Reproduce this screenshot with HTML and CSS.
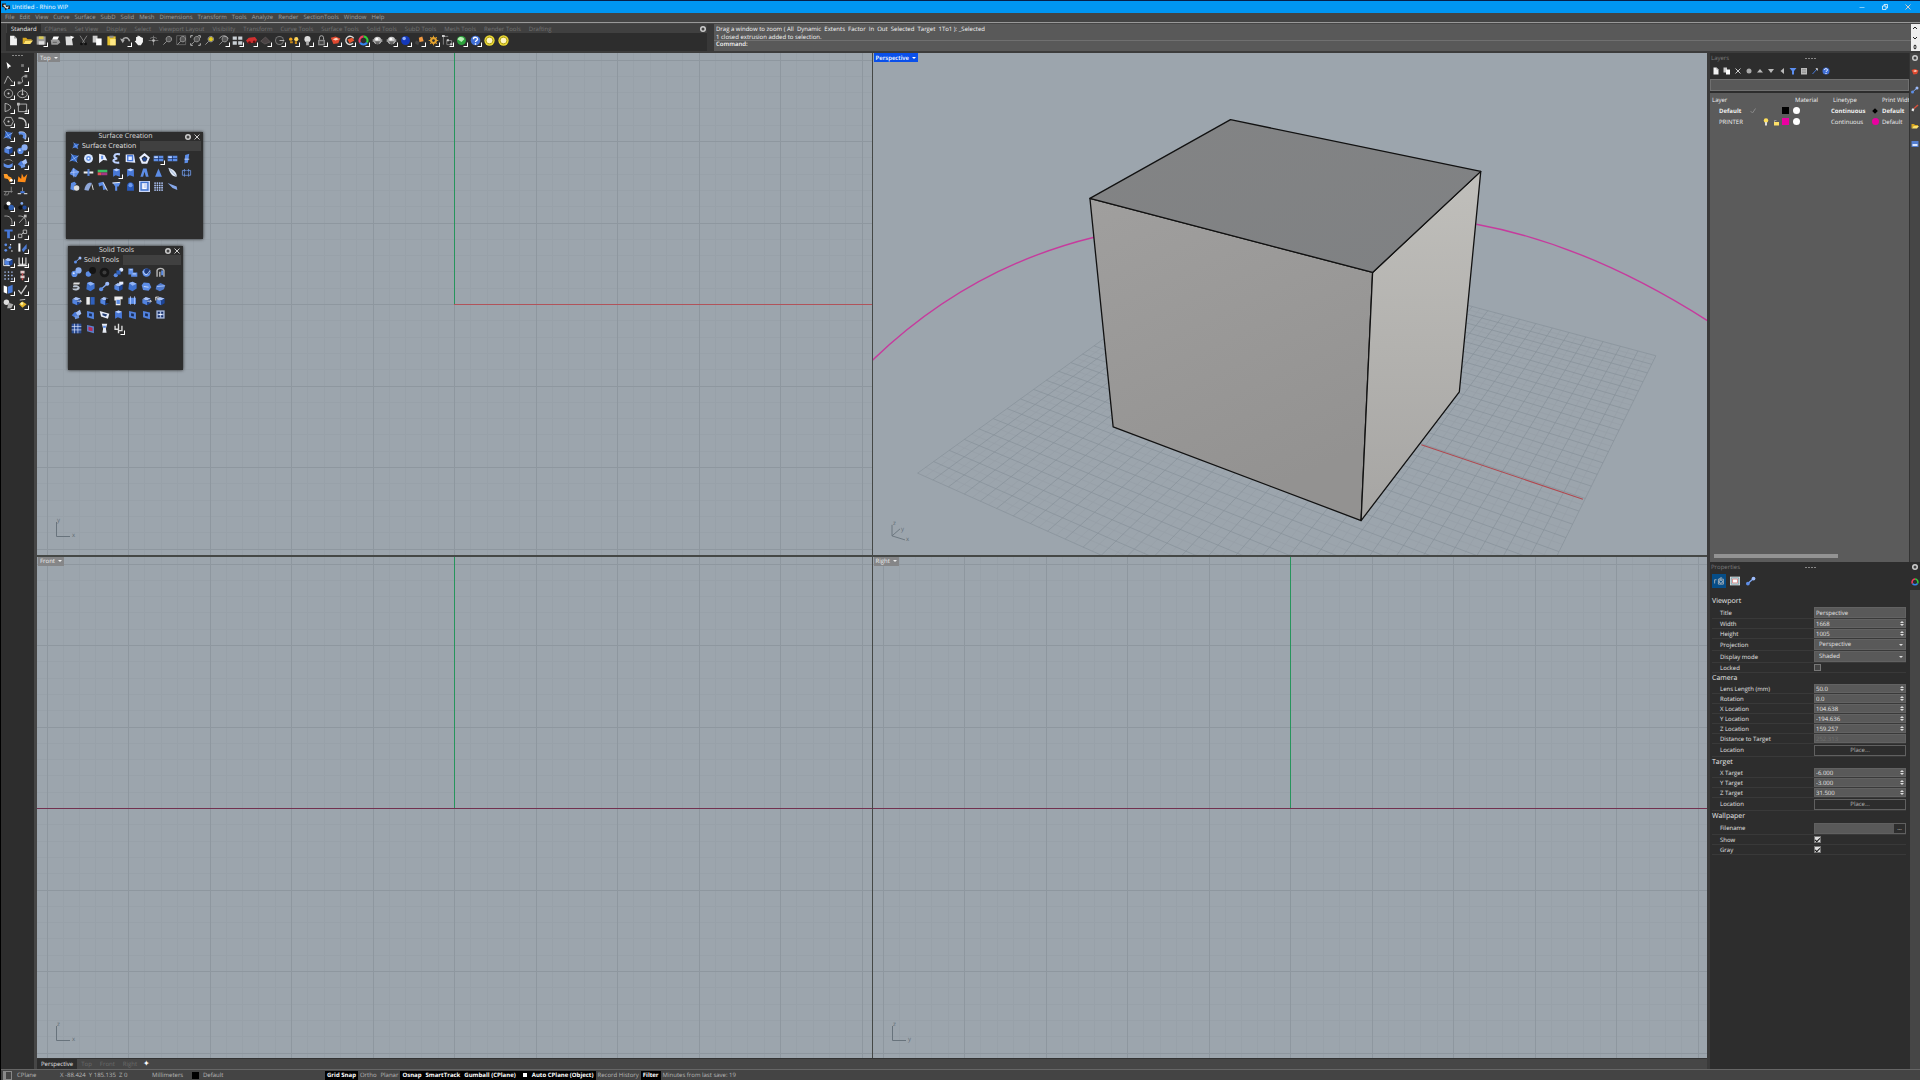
FILE: index.html
```html
<!DOCTYPE html>
<html lang="en">
<head>
<meta charset="utf-8">
<title>Untitled - Rhino WIP</title>
<link rel="stylesheet" href="styles.css">
</head>
<body>
<div class="app">
  <header class="titlebar">
    <span class="app-icon" data-icon="rhino"></span>
    <h1>Untitled - Rhino WIP</h1>
    <div class="window-buttons">
      <button aria-label="Minimize" data-icon="minimize"></button>
      <button aria-label="Restore" data-icon="restore"></button>
      <button aria-label="Close" data-icon="close"></button>
    </div>
  </header>
  <nav class="menubar">
    <button>File</button><button>Edit</button><button>View</button><button>Curve</button><button>Surface</button><button>SubD</button><button>Solid</button><button>Mesh</button><button>Dimensions</button><button>Transform</button><button>Tools</button><button>Analyze</button><button>Render</button><button>SectionTools</button><button>Window</button><button>Help</button>
  </nav>
  <div class="topbar">
    <section class="ribbon">
      <div class="ribbon-tabs">
        <button class="active">Standard</button><button>CPlanes</button><button>Set View</button><button>Display</button><button>Select</button><button>Viewport Layout</button><button>Visibility</button><button>Transform</button><button>Curve Tools</button><button>Surface Tools</button><button>Solid Tools</button><button>SubD Tools</button><button>Mesh Tools</button><button>Render Tools</button><button>Drafting</button>
        <button class="gear" aria-label="Toolbar options" data-icon="gear"></button>
      </div>
      <div class="tools standard" data-tools="page folder save* print clip cut copy paste undo* hand orbit zoom zoombox zoomext zoomsel rotview* four* car* mesh* target* bulbs* bulb* lock* redshape* redring* wheel* ball ball* blueball* brush* gears* dims* greenball* help* yellow yellow"></div>
    </section>
    <section class="command">
      <div class="command-history">
        <p>Drag a window to zoom ( All&nbsp; Dynamic&nbsp; Extents&nbsp; Factor&nbsp; In&nbsp; Out&nbsp; Selected&nbsp; Target&nbsp; 1To1 ): _Selected</p>
        <p>1 closed extrusion added to selection.</p>
      </div>
      <label class="command-line">Command: <input type="text"></label>
      <div class="command-scroll"><button aria-label="Scroll up" data-icon="up"></button><button aria-label="Scroll down" data-icon="down"></button><button aria-label="Command list" data-icon="spin"></button></div>
    </section>
  </div>

  <div class="workspace">
    <aside class="sidebar">
      <span class="grip"></span>
      <div class="tools side" data-tools="arrow point* polyline* curve* circle* ellipse* arc* rect* polygon* fillet* surf* bluearc* box* spheres* pipe* plates* puzzle* flame trim split boolean* points* chamfer* blend* text* scale* array edge* cage* comb* dots* reddots* panels* check* shapes* gold*"></div>
    </aside>

    <main class="stage">
      <div class="viewports">
        <section class="viewport" data-view="top">
          <button class="view-label">Top <i></i></button>
        </section>
        <section class="viewport" data-view="perspective">
          <button class="view-label current">Perspective <i></i></button>
          <svg class="scene" viewBox="873 53 834 502" preserveAspectRatio="xMidYMid slice">
            <defs>
              <linearGradient id="leftFace" x1="0" y1="0" x2="0.4" y2="1"><stop offset="0" stop-color="#a09f9e"/><stop offset="1" stop-color="#939291"/></linearGradient>
              <linearGradient id="rightFace" x1="0" y1="0" x2="0" y2="1"><stop offset="0" stop-color="#c0bfbb"/><stop offset="1" stop-color="#a6a5a3"/></linearGradient>
              <linearGradient id="topFace" x1="0" y1="0" x2="1" y2="1"><stop offset="0" stop-color="#838485"/><stop offset="1" stop-color="#7f8183"/></linearGradient>
            </defs>
            <g class="ground"></g>
            <path d="M1421 445L1582.500 499.300" stroke="#b0484f"/>
            <path d="M872 361C935 300 1010 258 1094 237.500M1476 224.500C1560 240 1640 278 1708 321.500" fill="none" stroke="#c63b9d" stroke-width="1.400"/>
            <g stroke="#111" stroke-width="1.300" stroke-linejoin="round">
              <path d="M1089.800 198.700L1372.300 272.700L1360.800 520.700L1113 427Z" fill="url(#leftFace)"/>
              <path d="M1372.300 272.700L1480.400 171.700L1459 392L1360.800 520.700Z" fill="url(#rightFace)"/>
              <path d="M1089.800 198.700L1230.300 120L1480.400 171.700L1372.300 272.700Z" fill="url(#topFace)"/>
            </g>
            <path d="M892 525V536L905 540M892 536L900 529" fill="none" stroke="#68737c" stroke-width="0.900"/>
            <g class="axis-text"><text x="893" y="525">z</text><text x="901" y="531">y</text><text x="906" y="541">x</text></g>
          </svg>
        </section>
        <section class="viewport" data-view="front">
          <button class="view-label">Front <i></i></button>
        </section>
        <section class="viewport" data-view="right">
          <button class="view-label">Right <i></i></button>
        </section>
      </div>

      <section class="palette surface">
        <header><h2>Surface Creation</h2><button aria-label="Options" data-icon="gear"></button><button aria-label="Close" data-icon="close"></button></header>
        <div class="palette-tab"><span><b data-icon="surf"></b>Surface Creation</span></div>
        <div class="tools" data-tools="surf disc fan swirl sheet pentagon panes* panes strip cross3 crosspipe rgb boxpost* boxpost trap cone leaf net vase fold fold2 funnel arch picked checker wedge"></div>
      </section>
      <section class="palette solid">
        <header><h2>Solid Tools</h2><button aria-label="Options" data-icon="gear"></button><button aria-label="Close" data-icon="close"></button></header>
        <div class="palette-tab"><span><b data-icon="link"></b>Solid Tools</span></div>
        <div class="tools" data-tools="spheres darkpair darkring ballpair boxes bowl shell stack bevel link boxarrow bevel hexbox slab boxright half darkcube cubeedge boxpull boxright boxleft plates hole holewhite boxpost hole hole crate gridhole redhole vase2 cactus*"></div>
      </section>
    </main>

    <aside class="docks">
      <section class="dock layers">
        <div class="dock-main">
          <header><h2>Layers</h2><span class="grip"></span></header>
          <div class="layer-tools" data-tools="page copy close blob triup tridown trileft filter list hammer help"></div>
          <input class="search" type="text" aria-label="Search layers">
          <div class="layer-list">
            <table>
              <colgroup><col class="c-name"><col class="c-check"><col class="c-icon"><col class="c-icon"><col class="c-color"><col class="c-mat"><col class="c-line"><col class="c-icon"><col></colgroup>
              <thead><tr><th>Layer</th><th></th><th></th><th></th><th></th><th>Material</th><th>Linetype</th><th></th><th class="last">Print Width</th></tr></thead>
              <tbody>
                <tr class="bold"><td>Default</td><td><b class="dim" data-icon="tick"></b></td><td></td><td></td><td><i class="swatch black"></i></td><td><i class="dot"></i></td><td>Continuous</td><td><i class="diamond"></i></td><td>Default</td></tr>
                <tr><td>PRINTER</td><td></td><td><b data-icon="lamp"></b></td><td><b data-icon="padlock"></b></td><td><i class="swatch pink"></i></td><td><i class="dot"></i></td><td>Continuous</td><td><i class="dot pink"></i></td><td>Default</td></tr>
              </tbody>
            </table>
            <div class="hscroll"></div>
          </div>
        </div>
        <nav class="dock-tabs"><button aria-label="Options" data-icon="gear"></button><button aria-label="Display" data-icon="redshape"></button><button aria-label="Layers" data-icon="link"></button><button aria-label="Notes" data-icon="redbrush"></button><button aria-label="Libraries" data-icon="folder"></button><button aria-label="Help" data-icon="panelicon"></button></nav>
      </section>

      <section class="dock properties">
        <div class="dock-main">
          <header><h2>Properties</h2><span class="grip"></span></header>
          <div class="prop-tabs"><button class="on" aria-label="Camera" data-icon="camera"></button><button aria-label="Frame" data-icon="frame"></button><button aria-label="Material" data-icon="link"></button></div>
          <form>
            <h3>Viewport</h3>
            <div class="row tall"><label for="p1">Title</label><input id="p1" type="text" value="Perspective"></div>
            <div class="row num"><label for="p2">Width</label><input id="p2" type="text" value="1668"></div>
            <div class="row num"><label for="p3">Height</label><input id="p3" type="text" value="1005"></div>
            <div class="row tall drop"><label for="p4">Projection</label><select id="p4"><option>Perspective</option></select></div>
            <div class="row tall drop"><label for="p5">Display mode</label><select id="p5"><option>Shaded</option></select></div>
            <div class="row"><label for="p6">Locked</label><input id="p6" type="checkbox"></div>
            <h3>Camera</h3>
            <div class="row num"><label for="p7">Lens Length (mm)</label><input id="p7" type="text" value="50.0"></div>
            <div class="row num"><label for="p8">Rotation</label><input id="p8" type="text" value="0.0"></div>
            <div class="row num"><label for="p9">X Location</label><input id="p9" type="text" value="104.638"></div>
            <div class="row num"><label for="p10">Y Location</label><input id="p10" type="text" value="-194.636"></div>
            <div class="row num"><label for="p11">Z Location</label><input id="p11" type="text" value="159.257"></div>
            <div class="row"><label for="p12">Distance to Target</label><input id="p12" type="text" value="252.313" disabled></div>
            <div class="row action"><label for="p13">Location</label><button id="p13" type="button">Place...</button></div>
            <h3>Target</h3>
            <div class="row num"><label for="p14">X Target</label><input id="p14" type="text" value="-6.000"></div>
            <div class="row num"><label for="p15">Y Target</label><input id="p15" type="text" value="-3.000"></div>
            <div class="row num"><label for="p16">Z Target</label><input id="p16" type="text" value="31.500"></div>
            <div class="row action"><label for="p17">Location</label><button id="p17" type="button">Place...</button></div>
            <h3>Wallpaper</h3>
            <div class="row action"><label for="p18">Filename</label><div class="file"><input id="p18" type="text"><button type="button">...</button></div></div>
            <div class="row"><label for="p19">Show</label><input id="p19" type="checkbox" checked></div>
            <div class="row"><label for="p20">Gray</label><input id="p20" type="checkbox" checked></div>
          </form>
        </div>
        <nav class="dock-tabs"><button aria-label="Options" data-icon="gear"></button><button aria-label="Properties" data-icon="wheel"></button></nav>
      </section>
    </aside>
  </div>

  <footer class="statusbar">
    <button class="pane" aria-label="Toggle panels"></button>
    <span class="s-plane">CPlane</span><span class="s-coords">X -88.424&nbsp; Y 185.135&nbsp; Z 0</span><span class="s-units">Millimeters</span>
    <span class="s-layer"><i class="swatch black"></i>Default</span>
    <div class="toggles"><button class="on">Grid Snap</button><button>Ortho</button><button>Planar</button><button class="on">Osnap</button><button class="on">SmartTrack</button><button class="on">Gumball (CPlane)</button><button class="on"><i></i>Auto CPlane (Object)</button><button>Record History</button><button class="on">Filter</button><span>Minutes from last save: 19</span></div>
  </footer>
</div>
<script src="main.js"></script>
</body>
</html>
```
FILE: styles.css
```css
* { box-sizing: border-box; }
html, body { margin: 0; height: 100%; }
body { background: #000; color: #e4e4e4; font: 6px/8px "Open Sans", "Noto Sans", sans-serif; text-rendering: geometricPrecision; overflow: hidden; }
button, input, select { font: inherit; color: inherit; text-rendering: inherit; background: none; border: 0; padding: 0; margin: 0; border-radius: 0; outline: 0; min-width: 0; white-space: nowrap; }
h1, h2, h3, p { margin: 0; font: inherit; }
svg { display: block; }
[data-icon] { display: inline-block; flex: none; width: 8px; height: 8px; }
[data-icon] svg { width: 100%; height: 100%; }

.app { display: flex; flex-direction: column; min-height: 100vh; padding-left: 1px; }
.titlebar { display: flex; align-items: center; height: 13px; background: #0096f2; border-top: 1px solid #06204a; color: #fff; padding: 0 8px 0 1px; }
.titlebar h1 { margin-left: 2px; }
.window-buttons { margin-left: auto; display: flex; gap: 15px; }
.menubar { display: flex; gap: 5px; padding: 0 4px; height: 9px; background: #444; color: #a0a0a0; line-height: 7px; }
.topbar { display: flex; height: 31px; background: #464646; border-top: 1px solid #999; border-bottom: 2px solid #3c3c3c; padding-top: 1px; }
.ribbon { width: 713px; background: #2d2d2d; border-left: 5px solid #383838; border-right: 7px solid #383838; }
.ribbon-tabs { display: flex; align-items: center; height: 9px; padding-left: 1px; background: #404040; color: #747474; }
.ribbon-tabs button { padding: 0 4px; height: 9px; }
.ribbon-tabs .active { background: #2d2d2d; color: #eee; }
.ribbon-tabs .gear { margin-left: auto; width: 8px; height: 8px; padding: 0; }
.tools { display: flex; flex-wrap: wrap; }
.tools button { position: relative; width: 14px; height: 14px; display: grid; place-items: center; }
.tools svg { width: 11px; height: 11px; }
.tools .more::after { content: ""; position: absolute; right: 0; bottom: 0; border: 1px solid #fff; border-top-color: transparent; border-left-color: transparent; width: 3px; height: 3px; }
.standard { flex-wrap: nowrap; }
.command { flex: 1; display: grid; grid-template: 17px 1fr / 1fr 9px; background: #595959; color: #f6f6f6; }
.command-history { padding: 1px 2px 0; border-bottom: 1px solid #707070; }
.command-line { display: flex; gap: 2px; padding-left: 2px; font-weight: 600; line-height: 7px; }
.command-line input { flex: 1; }
.command-scroll { grid-column: 2; grid-row: 1 / 3; background: #eee; color: #222; display: flex; flex-direction: column; justify-content: space-between; }

.workspace { flex: 1; display: grid; grid-template-columns: 36px 1fr 213px; }
.sidebar { background: #2d2d2d; border-right: 3px solid #464646; }
.grip { display: block; width: 11px; height: 1px; background: repeating-linear-gradient(90deg, #888 0 2px, transparent 2px 3px); }
.sidebar .grip { margin: 2px auto; }
.side { width: 29px; }
.stage { position: relative; display: flex; flex-direction: column; background: #464646; }
.viewports { flex: 1; display: grid; grid-template: 1fr 1fr / 1fr 1fr; gap: 2px 1px; background: #454846; }
.viewport { position: relative; overflow: hidden; background: #9ca5ad; }
.viewport > svg { position: absolute; inset: 0; width: 100%; height: 100%; }
.view-label { position: absolute; z-index: 1; left: 1px; top: 0; display: flex; align-items: center; gap: 3px; height: 9px; padding: 0 2px; background: #858688; color: #eee; }
.view-label i { border: 2px solid transparent; border-top-color: currentColor; border-bottom: 0; width: 4px; height: 2px; }
.view-label.current { background: #0a50ea; color: #fff; font-weight: 600; }
.axis-text { font-size: 6px; fill: #606b74; }

.palette { position: absolute; background: #2d2d2d; box-shadow: 0 0 3px #222; }
.palette.surface { left: 29px; top: 79px; width: 137px; height: 107px; }
.palette.solid { left: 31px; top: 193px; width: 115px; height: 124px; }
.palette header { display: flex; align-items: center; height: 9px; gap: 1px; padding: 0 2px; font-size: 7px; color: #ddd; }
.palette h2 { flex: 1; text-align: center; }
.palette-tab { margin: 0 2px; height: 10px; background: #404040; font-size: 7px; line-height: 9px; }
.palette-tab span { display: inline-flex; align-items: center; gap: 2px; height: 10px; padding: 0 4px; background: #2d2d2d; }
.palette .tools { padding: 0 8px 0 1px; }

.docks { display: flex; flex-direction: column; background: #2d2d2d; border-left: 3px solid #3a3a3a; }
.dock { display: grid; grid-template-columns: 1fr 10px; }
.dock-main { min-width: 0; display: flex; flex-direction: column; }
.dock header { display: flex; height: 10px; align-items: center; padding-left: 1px; color: #7c7c7c; }
.dock header h2 { width: 94px; }
.layers { height: 509px; }
.layers .dock-main { border-right: 1px solid #333; }
.layer-tools { display: flex; gap: 1px; height: 16px; align-items: center; padding-left: 1px; }
.layer-tools button { width: 10px; height: 10px; display: grid; place-items: center; }
.layer-tools svg { width: 8px; height: 8px; }
.search { height: 12px; background: #595959; border: 1px solid #707070; }
.layer-list { flex: 1; margin-top: 2px; background: #5b5b5b; overflow: hidden; display: flex; flex-direction: column; }
table { border-collapse: collapse; table-layout: fixed; width: 100%; margin-top: 1px; color: #f0f0f0; }
th, td { padding: 0; text-align: left; height: 11px; white-space: nowrap; }
th { padding-left: 2px; font-weight: 400; }
th.last { padding-left: 0; }
td:first-child { padding-left: 9px; }
td i, td b { vertical-align: middle; }
.bold { font-weight: 700; }
.c-name { width: 39px; } .c-check { width: 13px; } .c-icon { width: 10px; } .c-color { width: 11px; } .c-mat { width: 38px; } .c-line { width: 41px; }
.dim { opacity: .4; }
.swatch { display: inline-block; width: 7px; height: 7px; }
.black { background: #000; } .pink { background: #ea00a0; }
.dot { display: inline-block; width: 7px; height: 7px; border-radius: 50%; background: #fff; }
.dot.pink { background: #ea00a0; }
.diamond { display: inline-block; width: 4px; height: 4px; margin: 0 1px; background: #000; transform: rotate(45deg); }
.hscroll { width: 124px; height: 4px; margin: auto 0 4px 4px; background: #939393; }
.dock-tabs { display: flex; flex-direction: column; gap: 10px; align-items: center; background: #464646; padding-top: 1px; }
.dock-tabs button:first-child { margin-bottom: -4px; }
.properties { flex: 1; }
.properties .dock-tabs { background: linear-gradient(#2d2d2d 28px, #464646 28px); }
.properties .dock-tabs button:first-child { margin-bottom: -3px; }
.prop-tabs { display: flex; gap: 2px; padding: 2px 2px 0; height: 18px; }
.prop-tabs button { width: 14px; height: 14px; padding: 2px; }
.prop-tabs .on { background: #064d87; }
form { padding: 6px 4px 0 2px; }
h3 { font-size: 7px; line-height: 11px; height: 11px; color: #e8e8e8; }
.row { display: grid; grid-template-columns: 94px 1fr; padding-left: 8px; height: 10px; align-items: center; position: relative; border-bottom: 1px solid #393939; }
.row.tall { height: 12px; }
.row.action { height: 13px; }
.row > input[type="text"], select { width: 100%; height: 9px; padding-left: 1px; background: #595959; border: 1px solid #626262; line-height: 7px; }
.row.tall > input[type="text"], .row.tall > select { height: 11px; }
.row.drop > select { appearance: none; padding-left: 4px; }
.row > button { height: 11px; border: 1px solid #606060; color: #b4b4b4; }
.row > input[type="text"]:disabled { color: #707070; }
.num::after, .drop::after { content: ""; position: absolute; right: 2px; top: 5px; border: 2px solid transparent; border-top-color: #ddd; border-bottom: 0; }
.num::before { content: ""; position: absolute; right: 2px; top: 2px; border: 2px solid transparent; border-bottom-color: #ddd; border-top: 0; }
.drop::after { right: 3px; }
input[type="checkbox"] { appearance: none; width: 7px; height: 7px; background: #444; border: 1px solid #777; display: grid; place-items: center; }
input[type="checkbox"]:checked { background: #ddd; }
input:checked::before { content: ""; width: 2px; height: 4px; border: solid #111; border-width: 0 1px 1px 0; transform: rotate(45deg); }
.file { display: grid; grid-template-columns: 1fr 11px; height: 11px; border: 1px solid #606060; }
.file input { background: #595959; }

.view-tabs { display: flex; height: 11px; color: #6c6c6c; border-top: 1px solid #333; }
.view-tabs button { padding: 0 4px; }
.view-tabs .on { background: #2d2d2d; color: #e4e4e4; }
.view-tabs .add { color: #fff; font-size: 8px; padding: 0 2px; }
.statusbar { display: flex; align-items: center; height: 11px; background: #444; border-top: 1px solid #666; color: #b8b8b8; padding-left: 2px; white-space: nowrap; }
.pane { width: 9px; height: 9px; border: 1px solid #888; border-left-width: 3px; }
.s-plane { width: 43px; margin-left: 5px; } .s-coords { width: 92px; } .s-units { width: 40px; } .s-layer { width: 133px; display: flex; gap: 4px; align-items: center; }
.toggles { display: flex; }
.toggles button, .toggles span { height: 9px; padding: 0 2px; }
.toggles .on { background: #000; color: #fff; font-weight: 700; }
.toggles i { display: inline-block; width: 4px; height: 4px; margin: 0 5px 0 3px; background: #fff; }
```
FILE: main.js
```js
// Line work shared by many icons.
const S = (d, c = '#bbb', w = 1.3) => `<path d="${d}" fill="none" stroke="${c}" stroke-width="${w}"/>`;
const F = (d, c = '#5d8de6') => `<path d="${d}" fill="${c}"/>`;
const C = (x, y, r, c = '#5d8de6') => `<circle cx="${x}" cy="${y}" r="${r}" fill="${c}"/>`;
const BOX = F('M2 6L7 3L14 5L9 8Z', '#a9c4fa') + F('M2 6L9 8V15L2 12Z', '#5283df') + F('M9 8L14 5V12L9 15Z', '#1d4599');
const ZOOM = C(10, 6, 4, '#555') + S('M10 2A4 4 0 1 1 9.900 2M7 9L2 14', '#999');
const HOLE = F('M3 3L13 5V15L3 12Z', '#5283df') + F('M6 6L10 7V11L6 10Z', '#182b55');

const icons = {
  rhino: F('M0 1H8V5H16V12H10L7 15L5 9L0 8Z', '#222') + F('M2 4L7 3L8 8L14 7L11 12L7 10Z', '#ddd'),
  minimize: S('M3 9H13', '#fff', 1), restore: S('M3 6H10V13H3ZM6 6V3H13V10H10', '#fff', 1.5), close: S('M3 3L13 13M13 3L3 13', '#ccc', 2),
  gear: C(8, 8, 6, '#ccc') + C(8, 8, 3, '#444'), up: S('M4 10L8 6L12 10', '#222', 2), down: S('M4 6L8 10L12 6', '#222', 2),
  spin: F('M4 7L8 3L12 7ZM4 9H12L8 13Z', '#222'),
  page: F('M3 1H9L13 5V15H3Z', '#f2f2f2') + F('M9 1V5H13Z', '#999'), folder: F('M1 4H6L8 6H14V8H5L2 13H1Z', '#d8a820') + F('M5 8H16L12 13H2Z', '#ffe16b'),
  save: F('M1 2H14V14H1Z', '#999') + F('M4 2H11V6H4Z', '#d9ca55') + F('M4 9H12V14H4Z', '#ddd'),
  print: F('M5 2H13L11 7H3Z', '#fff') + F('M1 7H13L15 11L11 14H2Z', '#999') + F('M4 10H10V11H4Z', '#444'),
  clip: F('M2 2H11L13 15H3Z', '#ddd') + F('M9 1L15 3L11 6Z', '#fff'), cut: S('M3 1L10 12M13 1L6 12', '#888') + C(5, 13, 2, '#111') + C(11, 13, 2, '#111'),
  copy: F('M1 1H8V11H1Z', '#ccc') + F('M6 5H14V15H6Z', '#fff'), paste: F('M2 2H14V15H2Z', '#e5c22f') + F('M5 1H11V4H5Z', '#888') + F('M6 6H14V15H6Z', '#ffe985'),
  undo: S('M3 8C6 2 12 3 14 9', '#aaa', 2) + F('M0 5L4 12L7 7Z', '#aaa'), hand: F('M3 8V3H5V1H7V2L9 1V3H11V4H13V10L10 15H6L1 9Z', '#f4f4f4'),
  orbit: S('M8 1V15M1 8H15M3 5C6 3 10 3 13 5', '#777') + C(8, 8, 2, '#bbb'), zoom: ZOOM,
  zoombox: S('M1 1H14V14H1Z', '#777', 1) + ZOOM, zoomext: S('M1 4V1H4M12 1H15V4M15 12V15H12M1 12V15H4', '#ccc') + ZOOM,
  zoomsel: ZOOM + C(10, 6, 3, '#e1ca20'), rotview: ZOOM + S('M2 5C5 0 12 0 15 5', '#bbb'),
  four: F('M1 2H7V7H1ZM9 2H15V7H9ZM1 9H7V14H1ZM9 9H15V14H9Z', '#c9d0d5'), car: F('M0 8L4 4L13 3L16 7L14 11L3 12Z', '#d03030') + C(5, 11, 2, '#611') + C(12, 10, 2, '#611'),
  mesh: F('M1 9L8 3L15 10L7 13Z', '#4a4344') + S('M1 9L8 3L15 10L7 13Z', '#5c5757'), target: C(8, 8, 6.500, '#777') + C(8, 8, 5, '#333') + S('M8 8H15', '#bbb'),
  bulbs: C(4, 6, 2.500, '#f1a41b') + C(12, 6, 3, '#ffd65b') + F('M3 9H7V12H3ZM10 9H13V13H10Z', '#c98b1a'), bulb: C(8, 6, 4.500, '#ddd') + F('M6 9H10V15H6Z', '#aaa'),
  lock: S('M5 7V4A3 3 0 0 1 11 4V7', '#bbb') + F('M3 7H13V15H3Z', '#888') + F('M5 9H11V13H5Z', '#444'), redshape: F('M1 4L8 2L15 5L12 12L5 13Z', '#df4930') + F('M4 6L9 4L13 6L8 8Z', '#ffd1ba'),
  redring: S('M14 5A6 6 0 1 0 13 12', '#ddd', 2) + F('M5 6L12 4L15 8L8 12Z', '#e6562f'),
  wheel: S('M8 2A6 6 0 0 1 13 11', '#31cf38', 3) + S('M13 11A6 6 0 0 1 3 11', '#3485ef', 3) + S('M3 11A6 6 0 0 1 8 2', '#f03d63', 3),
  ball: C(8, 8, 5.500, '#c8c8c8') + F('M1 6H4V10H1ZM12 6H15V10H12Z', '#999') + C(7, 6, 2, '#fff') + F('M4 9H12L10 13H6Z', '#666'), blueball: C(8, 8, 6.500, '#1438ba') + C(6, 5, 2.500, '#8fb0ff'),
  brush: F('M3 8L8 10L6 15L1 12Z', '#444') + F('M7 4L12 2L14 9L8 10Z', '#f39a42'), gears: C(8, 8, 5, '#e5a32d') + S('M8 1V15M1 8H15M3 3L13 13M13 3L3 13', '#e5a32d') + C(8, 8, 2, '#343434'),
  dims: S('M2 14V2H9M7 8H14V14H7Z', '#888') + F('M0 0H4V3H0ZM7 6H10V9H7ZM12 12H15V15H12Z', '#ccc'), greenball: C(8, 8, 6.500, '#2ca13c') + F('M2 6C5 1 11 3 12 6L8 10Z', '#b5efb4'),
  help: C(8, 8, 7, '#416fd5') + S('M5 6C5 2 11 3 11 6C11 8 8 8 8 10M8 12V14', '#fff', 2), yellow: C(8, 8, 7.500, '#eddb31') + S('M8 3A5 5 0 1 1 7.900 3', '#82731b', 1) + C(8, 8, 4, '#fff6c4'),
  arrow: F('M5 3L12 9L9 10L7 13Z', '#fff'), point: F('M6 6H10V10H6Z', '#777'), polyline: S('M2 14L7 3L14 12'), curve: S('M3 13C15 14 0 3 13 3') + F('M1 11H5V15H1ZM11 1H15V5H11Z', '#999'),
  circle: S('M8 2A6 6 0 1 1 7.900 2') + C(8, 8, 1.500, '#ccc'), ellipse: S('M8 4A7 5 0 1 1 7.900 4') + C(8, 9, 1.500, '#ccc') + S('M8 1V8'), arc: S('M3 2C14 4 14 11 3 14V2'), rect: S('M2 3H14V14H2Z') + F('M0 1H4V5H0ZM12 12H15V15H12Z', '#bbb'),
  polygon: S('M4 2H12L15 8L12 14H4L1 8Z') + C(8, 8, 1.500, '#ccc'), fillet: S('M2 3C10 2 14 7 13 15', '#ccc', 2),
  surf: F('M4 2L13 4L11 13L2 11Z', '#3266c5') + S('M3 1L12 14M1 12L14 4', '#a5c4ff', 1), bluearc: F('M2 3C12 1 15 6 12 14L8 11C10 7 8 6 3 7Z') + S('M3 3C12 1 15 6 12 14', '#dce8ff', 1),
  box: BOX, spheres: C(5, 10, 4.500) + C(11, 5, 4.500, '#8cb0f3') + C(4, 9, 1.500, '#dbe7ff'), pipe: F('M1 7C4 11 11 11 14 7V12C10 16 5 15 1 12Z') + S('M2 4C5 1 12 2 14 5', '#999'),
  plates: F('M1 9L6 4L10 7L5 12Z', '#4778d9') + F('M7 5L13 1L15 7L10 11Z', '#a6c1f6') + F('M5 10L11 8L12 13L6 15Z', '#6b94df'),
  puzzle: F('M1 3H6L8 6L12 8L14 12L10 15L7 10L2 9Z', '#ff9c28') + C(12, 12, 2, '#fff'), flame: F('M1 14L2 6L6 10L7 2L10 8L15 3L12 15Z', '#ff8b16'),
  trim: S('M12 1V10M1 8H14M5 8L2 13H7L9 8', '#888'), split: S('M8 2V8', '#999') + S('M1 11H6M10 11H15', '#ccc', 2) + S('M5 9H11', '#4778da', 3), boolean: C(5, 10, 4, '#111') + C(12, 11, 4, '#315faf') + C(8, 5, 3, '#fff'),
  points: C(5, 11, 3, '#111') + C(11, 11, 3, '#214a9c') + C(7, 5, 2, '#80a8ec'), chamfer: S('M2 3C10 2 14 7 13 15', '#aaa'), blend: S('M2 3C10 2 14 7 13 15M3 13L12 3', '#aaa') + F('M10 1H14V5H10Z', '#bbb'),
  text: F('M2 2H14V5H10V15H6V5H2Z', '#4779da'), scale: S('M2 9H7V14H2ZM9 3H14V8H9ZM6 10L10 6', '#bbb'), array: C(4, 4, 2) + C(11, 4, 1, '#fff') + C(4, 12, 2) + C(10, 8, 2) + C(13, 13, 1, '#fff'),
  edge: F('M2 2H5V14H2Z', '#fff') + F('M7 11L14 3V9L9 15Z', '#4d7bd3'), cage: BOX + S('M1 4V14H10', '#fff'), comb: S('M3 2V12H13V2M8 2V14M1 14H15', '#eee', 1.500),
  dots: [2, 7, 12].map(x => [2, 7, 12].map(y => F(`M${x} ${y}h2v2h-2Z`, '#aec8fc')).join('')).join(''), reddots: F('M5 1H11V5H5ZM5 8H11V12H5Z', '#e4caca') + F('M7 5H9V8H7ZM7 12H9V15H7Z', '#d34a4a'),
  panels: F('M1 2L6 4V14L1 12Z', '#fff') + F('M7 4L14 1V12L7 14Z', '#4779d6'), check: S('M2 9L6 14L14 2', '#ccc', 2), shapes: C(5, 6, 4, '#ddd') + F('M8 7L15 9L12 15H6Z', '#aaa'), gold: F('M3 9L8 5L14 9L8 14Z', '#e5b72f') + C(7, 8, 2, '#fff3a1') + S('M4 3L12 2', '#ccc'),
  disc: C(8, 8, 6.500, '#d9e7ff') + C(8, 8, 3.500) + C(8, 8, 1.500, '#fff'), fan: F('M3 1L11 3L15 11L9 10L3 15Z', '#e9efff') + F('M6 4H9V9H6Z'), swirl: S('M13 2C3 0 3 7 9 8C0 10 3 15 12 14', '#bdd2ff', 3),
  sheet: F('M1 2H13L15 14L1 13Z', '#e3ebff') + S('M4 4H11V11H4Z', '#4778da', 2), pentagon: S('M8 2L14 7L11 14H5L2 7Z', '#e7eeff', 3) + C(8, 9, 3, '#23458d'),
  panes: F('M1 4H15V12H1Z') + F('M2 5H7V8H2Z', '#b9d1ff') + S('M8 4V12M1 8H15', '#152c64', 1), strip: F('M6 3L12 1L10 14L5 15Z') + S('M5 9H12', '#c6d6ff'),
  cross3: F('M6 1L15 7L10 15L1 10Z') + S('M2 8L14 7M7 2V15', '#b9ceff', 1), crosspipe: S('M1 8H15', '#eee', 3) + S('M8 3V13', '#5885da', 3), rgb: F('M1 4H15V8H1Z', '#38bf62') + F('M1 8H6V12H1Z', '#df4d54') + F('M6 8H15V12H6Z', '#a73583'),
  boxpost: F('M3 4L8 2L13 4V14L7 12L3 14Z', '#4878d6') + F('M3 4L8 2L13 4L8 6Z', '#b9d0ff'), trap: F('M6 2H11L14 14H10L8 7L6 14H2Z'), cone: F('M8 2L13 14H3Z'),
  leaf: F('M2 1C10 3 15 9 14 14C7 14 4 8 2 1Z', '#dfe9f7') + S('M3 2L13 13', '#809bc4', 1), net: S('M2 5H14V12H2ZM5 3V14M11 3V14', '#6a91da') + C(8, 8, 3, '#242d40'),
  vase: F('M3 3L8 1L11 4L8 7V14L2 12Z') + C(11, 10, 4, '#ddd'), fold: F('M2 13C3 5 8 1 13 3L8 14Z', '#8ea6d8') + S('M13 5L15 13', '#eee'), fold2: F('M2 3L9 1L14 12L9 13L8 6L3 8Z') + S('M9 2L15 14', '#eee'),
  funnel: F('M2 2H14L11 8H9V14H6V8Z') + S('M2 3L13 2', '#fff'), arch: F('M3 14V7C3 0 13 0 13 7V14Z', '#2858b8') + C(8, 6, 3, '#6e99ec'), picked: F('M0 0H16V16H0Z', '#ccd8f7') + S('M3 2H13V13H3Z', '#3f71ce', 2) + S('M6 4V11H10', '#fff', 1.500),
  checker: [0, 1, 2, 3].map(i => [0, 1, 2, 3].map(j => C(3 + i * 3.400, 3 + j * 3.400, 1.300, '#adc4f6')).join('')).join(''), wedge: F('M1 3L14 8L15 13L8 10Z', '#86a8ea'), link: S('M3 12L12 4', '#81a8f3', 2) + C(3, 12, 3) + C(12, 4, 3, '#9ebcfb'),
  darkpair: C(5, 10, 4) + C(11, 5, 5, '#141414'), darkring: C(8, 8, 7, '#161616') + C(8, 8, 3, '#3d3d3d'), ballpair: C(4, 12, 3) + C(12, 4, 3, '#dce8ff') + F('M5 5H11V11H5Z', '#2f61bd'), boxes: F('M2 2H9V8H15V14H6V11H2Z') + S('M4 4H8M8 10H13', '#d0e0ff'),
  bowl: C(8, 8, 6) + C(9, 6, 4, '#203b79') + S('M3 6C5 13 9 13 13 5', '#cbdcff'), shell: S('M3 14V5C4 1 12 1 13 5V14M7 14V7', '#bbb', 2) + F('M9 5H12V12H9Z'), stack: F('M4 2H13L12 5H3Z', '#ddd') + F('M3 7C8 5 15 8 12 12C8 15 2 14 2 11H8L10 9L3 9Z', '#bbc5d4'),
  bevel: F('M3 3L8 1L14 4V11L8 15L2 12Z', '#3f72d0') + F('M3 3L8 1L14 4L8 7Z', '#91b3f4'), boxarrow: BOX + F('M9 1H15V5H9Z', '#e8eeff'), hexbox: F('M4 2L12 3L15 9L11 14L3 13L1 6Z') + S('M4 8L11 9', '#cee0ff'), slab: F('M2 7L8 3L15 6L13 12L7 15L1 12Z', '#507acb') + S('M3 8L14 7', '#adc7fb'),
  boxright: BOX + S('M9 9H15M13 7L15 9L13 11', '#ddd'), half: F('M2 3H7V14H2Z', '#eee') + F('M8 3H14V14H8Z', '#2f60bd'), darkcube: BOX + F('M10 5H15V12H10Z', '#202020'), cubeedge: F('M2 2H14V6H11V15H4V8H2Z', '#eee') + F('M5 7H10V13H5Z'),
  boxpull: F('M2 4H13V13H2Z') + S('M5 2V14M11 2V14', '#afc8ff'), boxleft: BOX + S('M1 3L6 8M1 8V3H6', '#ddd'), hole: HOLE, holewhite: F('M1 3L15 7L13 14L3 11Z', '#e8edf8') + F('M5 6L12 8L10 11L5 9Z', '#213b72'),
  crate: F('M2 2H14V14H2Z', '#a7b9dd') + F('M4 4H7V7H4ZM9 4H12V7H9ZM4 9H7V12H4ZM9 9H12V12H9Z', '#142d67') + S('M6 8H10', '#fff'), gridhole: F('M1 1H15V15H1Z', '#2b4c92') + S('M1 5H15M1 10H15M5 1V15M10 1V15', '#dce6ff', 1), redhole: F('M3 3L13 5V15L3 12Z', '#5a82cf') + F('M5 5L11 7V12L5 11Z', '#b62b56'),
  vase2: F('M4 1H12L10 8L11 14H5L6 8Z', '#e7ebf4') + F('M6 4H10V7H6Z'), cactus: S('M8 1V15M3 4V9H8M13 4V11H8', '#ddd', 2), blob: C(8, 8, 5, '#aaa'), triup: F('M2 11L8 4L14 11Z', '#bbb'), tridown: F('M2 4H14L8 12Z', '#bbb'), trileft: F('M12 2V14L5 8Z', '#bbb'),
  filter: F('M1 2H15L10 8V15H6V8Z', '#5b8ef0'), list: F('M2 2H14V15H2Z', '#bbb') + S('M4 5H12M4 8H12M4 11H12', '#777', 1), hammer: S('M3 14L12 4', '#4677d5', 2) + F('M9 2L14 3L13 8Z', '#ddd'), tick: S('M3 8L7 12L13 3', '#ccc', 2),
  lamp: C(8, 5, 4.500, '#ffe05a') + F('M6 8H10V15H6Z', '#ddd'), padlock: S('M5 8V5H9', '#bbb') + F('M4 8H14V15H4Z', '#ffe168'), redbrush: F('M2 9L7 9L5 15L1 13Z', '#eee') + S('M6 9L14 2', '#d54e39', 3), panelicon: F('M1 2H15V14H1Z', '#547ecf') + F('M3 8H13V12H3Z', '#dce7ff'),
  camera: S('M1 12V6H4M7 5H15V13H7ZM9 5L10 3H13', '#bbb') + S('M11 6.500A2.500 2.500 0 1 1 10.900 6.500', '#ddd'), frame: F('M0 1H16V15H0Z', '#ddd') + S('M2 3H14V13H2Z', '#488fa0', 1) + S('M4 5H12V11H4Z', '#df6868', 1) + F('M5 6H11V10H5Z', '#fff')
};
const svg = body => `<svg viewBox="0 0 16 16" aria-hidden="true">${body}</svg>`;

document.querySelectorAll('[data-icon]').forEach(el => { el.innerHTML = svg(icons[el.dataset.icon]); });
document.querySelectorAll('[data-tools]').forEach(bar => {
  bar.innerHTML = bar.dataset.tools.split(' ').map(entry => {
    const name = entry.replace('*', '');
    return `<button aria-label="${name}"${entry.endsWith('*') ? ' class="more"' : ''}>${svg(icons[name])}</button>`;
  }).join('');
});

// Tabs under the four viewports.
document.querySelector('.viewports').insertAdjacentHTML('afterend',
  '<nav class="view-tabs"><button class="on">Perspective</button><button>Top</button><button>Front</button><button>Right</button><button class="add" aria-label="New tab">✦</button></nav>');

// Parallel views: minor line every 16.3 units, major line every fifth.
const axes = { top: ['#b0535a', 'y', 'x'], front: ['#72314f', 'z', 'x'], right: ['#72314f', 'z', 'y'] };
document.querySelectorAll('.viewport').forEach(view => {
  const spec = axes[view.dataset.view];
  if (!spec) return;
  let minor = '', major = '';
  for (let i = -60; i <= 60; i++) {
    const x = Math.round(i * 16.3) + 0.5;
    const line = `M${x} -600V600M-1200 ${x}H1200`;
    if (i % 5) minor += line; else major += line;
  }
  const flat = view.dataset.view !== 'top';
  const w = view.clientWidth, h = view.clientHeight;
  view.insertAdjacentHTML('beforeend', `<svg><g transform="translate(${Math.floor(w / 2)} ${Math.floor(h / 2)})" fill="none">
    <path d="${minor}" stroke="#98a1a9"/><path d="${major}" stroke="#8e979f"/>
    <path d="M0.500 0.500V-600" stroke="#27945c"/><path d="M${flat ? -1200 : 0} 0.500H1200" stroke="${spec[0]}"/></g>
    <g transform="translate(19 ${h - 19})"><path d="M0.500 -14V0.500H14" fill="none" stroke="#68737c"/>
    <g class="axis-text"><text x="1" y="-14">${spec[1]}</text><text x="16" y="1">${spec[2]}</text></g></g></svg>`);
});

// Ground plane in the perspective view, mapped from a unit square to its four corners.
const [A, B, Cn, D] = [[917.6, 473.3], [1236, 243.5], [1655.4, 356], [1474.4, 722]];
const dx1 = B[0] - Cn[0], dx2 = D[0] - Cn[0], dx3 = A[0] - B[0] + Cn[0] - D[0];
const dy1 = B[1] - Cn[1], dy2 = D[1] - Cn[1], dy3 = A[1] - B[1] + Cn[1] - D[1];
const det = dx1 * dy2 - dx2 * dy1;
const g = (dx3 * dy2 - dx2 * dy3) / det, k = (dx1 * dy3 - dx3 * dy1) / det;
const map = (u, v) => {
  const q = g * u + k * v + 1;
  return [((B[0] * (g + 1) - A[0]) * u + (D[0] * (k + 1) - A[0]) * v + A[0]) / q,
    ((B[1] * (g + 1) - A[1]) * u + (D[1] * (k + 1) - A[1]) * v + A[1]) / q].map(n => n.toFixed(1)).join(' ');
};
let fine = '', strong = '';
for (let i = 0; i <= 56; i++) {
  const t = i / 56, d = `M${map(t, 0)}L${map(t, 1)}M${map(0, t)}L${map(1, t)}`;
  if (i % 2) fine += d; else strong += d;
}
document.querySelector('.ground').innerHTML = S(fine, '#959ea6', 0.6) + S(strong, '#87919a', 0.7);
```
